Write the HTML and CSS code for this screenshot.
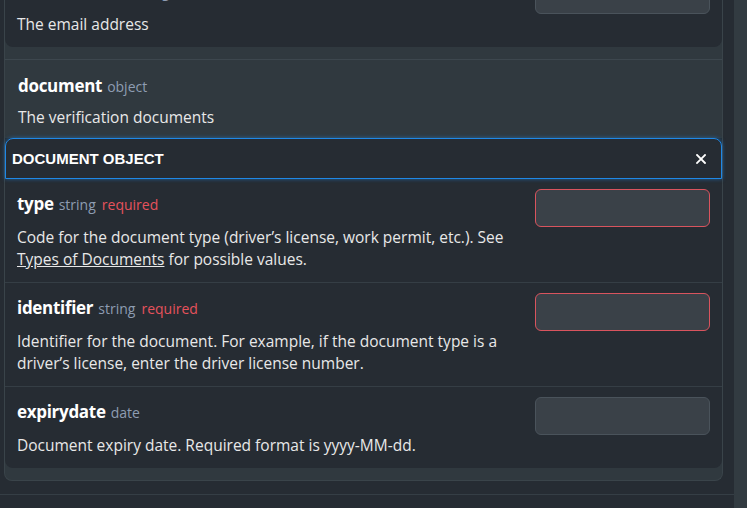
FILE: index.html
```html
<!DOCTYPE html>
<html lang="en">
<head>
<meta charset="utf-8">
<title>Document object</title>
<link rel="stylesheet" href="styles.css">
</head>
<body>
<div class="page">
  <div class="main">
    <div class="list">
      <div class="field expanded first">
        <div class="card">
          <div class="prop">
            <div class="prop-text">
              <div class="prop-title"><span class="name">emailaddress</span> <span class="type">string</span></div>
              <div class="desc">The email address</div>
            </div>
            <div class="input"></div>
          </div>
        </div>
      </div>
      <div class="field expanded">
        <div class="field-head">
          <div class="prop-title"><span class="name">document</span> <span class="type">object</span></div>
          <div class="desc">The verification documents</div>
        </div>
        <div class="card">
          <div class="card-header">
            <span class="card-title">DOCUMENT OBJECT</span>
            <svg class="close" width="10" height="10" viewBox="0 0 10 10"><path d="M1 1L9 9M9 1L1 9" stroke="#ffffff" stroke-width="1.8" stroke-linecap="square"/></svg>
          </div>
          <div class="prop">
            <div class="prop-text">
              <div class="prop-title"><span class="name">type</span> <span class="type">string</span> <span class="req">required</span></div>
              <div class="desc">Code for the document type (driver’s license, work permit, etc.). See <a class="link" href="#">Types of Documents</a> for possible values.</div>
            </div>
            <div class="input invalid"></div>
          </div>
          <div class="prop">
            <div class="prop-text">
              <div class="prop-title"><span class="name">identifier</span> <span class="type">string</span> <span class="req">required</span></div>
              <div class="desc">Identifier for the document. For example, if the document type is a driver’s license, enter the driver license number.</div>
            </div>
            <div class="input invalid"></div>
          </div>
          <div class="prop">
            <div class="prop-text">
              <div class="prop-title"><span class="name">expirydate</span> <span class="type">date</span></div>
              <div class="desc">Document expiry date. Required format is yyyy-MM-dd.</div>
            </div>
            <div class="input"></div>
          </div>
        </div>
      </div>
    </div>
    <div class="next-section"></div>
  </div>
  <div class="scrollbar"></div>
</div>
</body>
</html>
```

FILE: styles.css
```css
html, body {
  margin: 0;
  padding: 0;
  height: 100%;
  overflow: hidden;
}
body {
  background: #262c33;
  color: #e8e8e8;
  font-family: "Open Sans", "Noto Sans", sans-serif;
  font-size: 15.5px;
}
.page {
  display: flex;
  height: 508px;
  overflow: hidden;
}
.main {
  flex: 1;
  min-width: 0;
}
.scrollbar {
  width: 13px;
  background: #323b41;
}
.list {
  margin: -34px 11px 0 4px;
  background: #30393f;
  border: 1px solid #3a444a;
  border-top: none;
  border-radius: 0 0 8px 8px;
}
.field {
  padding: 14px 0 12px;
}
.field.first {
  padding-top: 0;
  border-bottom: 1px solid #3d474e;
}
.field-head {
  padding: 0 12px 0 13px;
}
.field-head .desc {
  margin-top: 7px;
}
.card {
  background: #262c33;
  border-radius: 0 0 8px 8px;
}
.field-head + .card {
  margin-top: 10px;
}
.card-header {
  height: 39px;
  border: 1px solid #1f88e6;
  border-radius: 8px 8px 0 0;
  box-shadow: 0 0 4px rgba(31, 136, 230, 0.55);
  display: flex;
  align-items: center;
  justify-content: space-between;
  padding: 0 15px 0 6px;
}
.card-title {
  font-family: "Liberation Sans", Arial, sans-serif;
  font-weight: bold;
  font-size: 15px;
  color: #ffffff;
}
.close {
  display: block;
}
.prop {
  display: flex;
  gap: 24px;
  padding: 13px 12px 12px;
}
.prop + .prop {
  border-top: 1px solid #353e45;
}
.prop-text {
  flex: 1;
  min-width: 0;
}
.prop-title {
  line-height: 24px;
  white-space: nowrap;
}
.name {
  font-weight: bold;
  font-size: 17px;
  color: #ffffff;
  letter-spacing: -0.3px;
}
.type {
  color: #8e9db2;
  font-size: 14px;
  margin-left: 1px;
}
.req {
  color: #e5525c;
  font-size: 14px;
  margin-left: 2px;
}
.desc {
  margin-top: 9px;
  line-height: 22px;
  color: #e8e8e8;
}
.link {
  color: #e8e8e8;
  text-decoration: underline;
}
.input {
  width: 173px;
  height: 36px;
  margin-top: -3px;
  background: #3a4148;
  border: 1px solid #4a535b;
  border-radius: 6px;
  flex: none;
}
.input.invalid {
  border-color: #d9545e;
}
.next-section {
  margin-top: 13px;
  border-top: 1px solid #353e45;
}
```
